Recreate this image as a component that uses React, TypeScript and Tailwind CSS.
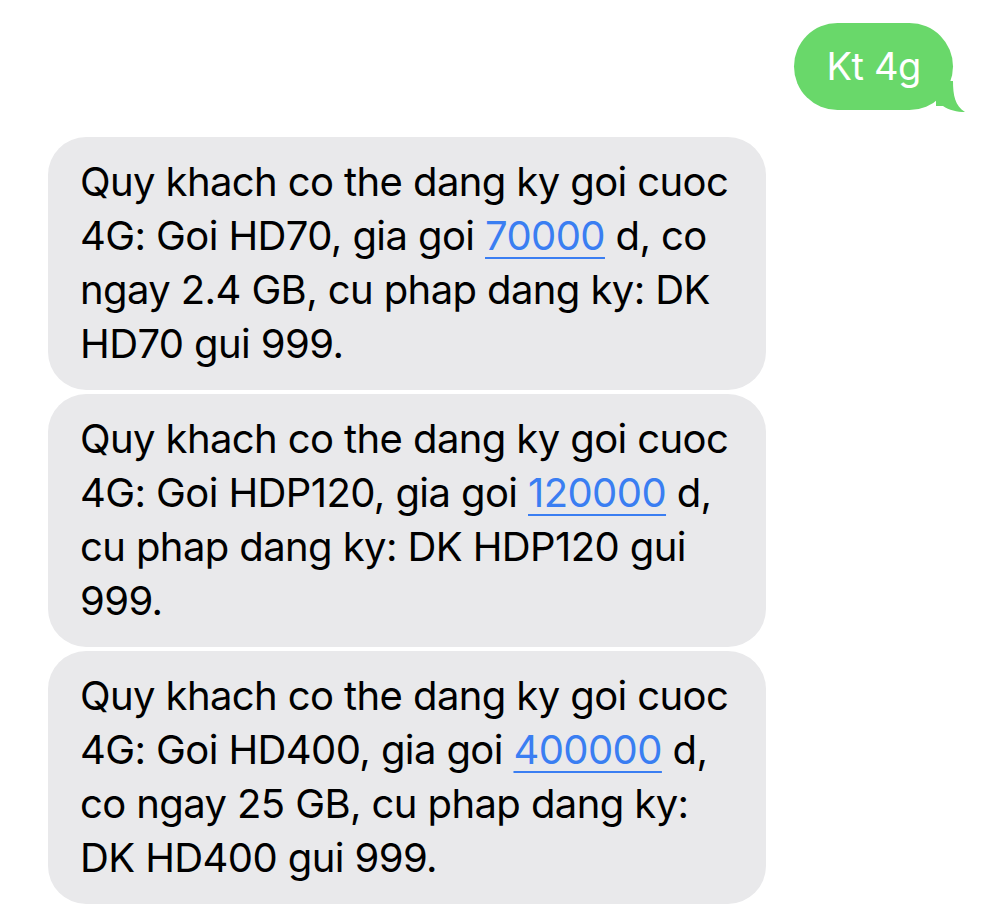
import React from "react";

type Part = string | { link: string };

const messages: Part[][][] = [
  [
    ["Quy khach co the dang ky goi cuoc"],
    ["4G: Goi HD70, gia goi ", { link: "70000" }, " d, co"],
    ["ngay 2.4 GB, cu phap dang ky: DK"],
    ["HD70 gui 999."],
  ],
  [
    ["Quy khach co the dang ky goi cuoc"],
    ["4G: Goi HDP120, gia goi ", { link: "120000" }, " d,"],
    ["cu phap dang ky: DK HDP120 gui"],
    ["999."],
  ],
  [
    ["Quy khach co the dang ky goi cuoc"],
    ["4G: Goi HD400, gia goi ", { link: "400000" }, " d,"],
    ["co ngay 25 GB, cu phap dang ky:"],
    ["DK HD400 gui 999."],
  ],
];

const Bubble = ({ lines }: { lines: Part[][] }) => {
  return (
    <div className="w-[718px] rounded-[38px] bg-[#e9e9eb] px-8 pt-[18px] pb-[19px] text-[40px] leading-[54px] tracking-[-0.6px] text-black">
      {lines.map((line, i) => (
        <div key={i} className="whitespace-pre">
          {line.map((p, j) =>
            typeof p === "string" ? (
              <span key={j}>{p}</span>
            ) : (
              <span
                key={j}
                className="text-[#3a7ef2] underline decoration-2 underline-offset-[7px]"
              >
                {p.link}
              </span>
            )
          )}
        </div>
      ))}
    </div>
  );
};

export default function App() {
  return (
    <div
      className="min-h-[907px] w-[1000px] overflow-hidden bg-white"
      style={{ fontFamily: "Inter, 'Noto Sans', sans-serif" }}
    >
      <div className="flex justify-end pt-[23px] pr-[47px]">
        <div className="relative rounded-[44px] bg-[#69d86a] px-8 h-[87px] flex items-center text-[38px] tracking-[-0.4px] text-white">
          <span className="relative z-10">Kt 4g</span>
          <svg
            className="absolute right-[-13px] bottom-[-3px]"
            width="30"
            height="32"
            viewBox="0 0 30 32"
          >
            <path
              d="M0 0 L17 0 C17 14 19 25 29 31 C21 31 13 29 7 25 L0 25 Z"
              fill="#69d86a"
            />
          </svg>
        </div>
      </div>
      <div className="mt-[27px] flex flex-col gap-[4px] pl-[48px]">
        {messages.map((m, i) => (
          <Bubble key={i} lines={m} />
        ))}
      </div>
    </div>
  );
}
